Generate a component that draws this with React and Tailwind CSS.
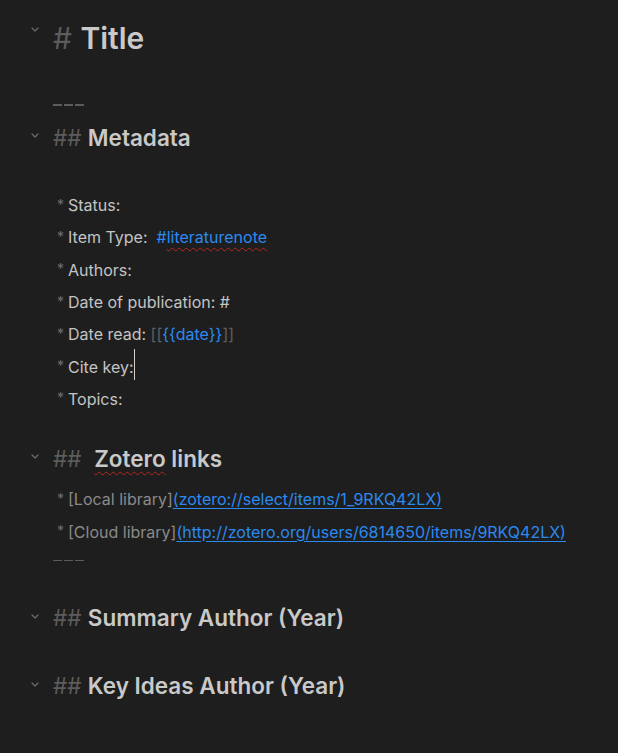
import React from 'react';

function Chevron() {
  return (
    <svg width="8" height="5" viewBox="0 0 8 5" className="shrink-0">
      <path d="M1 1 L4 4 L7 1" fill="none" stroke="#6b6b6b" strokeWidth="1.2" strokeLinecap="round" strokeLinejoin="round" />
    </svg>
  );
}

function Heading({ hashes, children, big, mt }) {
  return (
    <div className={`flex items-center ${big ? 'h-[40px]' : 'h-[32px]'} ${mt}`}>
      <div className={`w-[53px] pl-[31px] flex ${big ? 'self-start pt-[9px]' : 'self-start pt-[11px]'}`}>
        <Chevron />
      </div>
      <div className={`${big ? 'text-[30px]' : 'text-[22.5px]'} font-semibold text-[#c9c9c9] whitespace-pre leading-none`}>
        <span className="text-[#5c5c5c] font-normal">{hashes}</span>
        {children}
      </div>
    </div>
  );
}

function Rule({ mt }) {
  return (
    <div className={`h-[20px] flex items-center gap-[2px] pl-[53px] ${mt}`}>
      <span className="w-[9px] h-[1.5px] bg-[#5c5c5c]" />
      <span className="w-[9px] h-[1.5px] bg-[#5c5c5c]" />
      <span className="w-[9px] h-[1.5px] bg-[#5c5c5c]" />
    </div>
  );
}

function Item({ children }) {
  return (
    <div className="h-[32.3px] flex items-center pl-[57px] text-[16px] text-[#c4c4c4] whitespace-pre">
      <span className="text-[#6e6e6e] text-[14px] mr-[4px] -translate-y-[1px]">*</span>
      {children}
    </div>
  );
}

const squiggle = 'underline decoration-wavy decoration-[#b3261e] decoration-1 underline-offset-[4px]';
const link = 'text-[#2a8af0] underline decoration-[#2a8af0] underline-offset-[3px]';

export default function App() {
  return (
    <div className="min-h-screen bg-[#1e1e1e] pt-[18px] font-['Inter','Noto_Sans',sans-serif] antialiased">
      <Heading hashes="# " big mt="">Title</Heading>
      <Rule mt="mt-[37px]" />
      <Heading hashes="## " mt="mt-[7px]">Metadata</Heading>

      <div className="mt-[35px]">
        <Item>Status:</Item>
        <Item>
          Item Type:  <span className="text-[#2a8af0]">#<span className={squiggle}>literaturenote</span></span>
        </Item>
        <Item>Authors:</Item>
        <Item>Date of publication: #</Item>
        <Item>
          Date read: <span className="text-[#5f5f5f]">[[</span><span className="text-[#2a8af0]">{'{{date}}'}</span><span className="text-[#5f5f5f]">]]</span>
        </Item>
        <Item>
          Cite key:<span className="inline-block w-px h-[31px] bg-[#d0d0d0] -translate-y-[2px]" />
        </Item>
        <Item>Topics:</Item>
      </div>

      <Heading hashes="##  " mt="mt-[28px]">
        <span className={squiggle}>Zotero</span> links
      </Heading>

      <div className="mt-[8px]">
        <Item>
          <span className="text-[#8a8a8a]">[Local library]</span>
          <span className={link}>(zotero://select/items/1_9RKQ42LX)</span>
        </Item>
        <Item>
          <span className="text-[#8a8a8a]">[Cloud library]</span>
          <span className={link}>(http://zotero.org/users/6814650/items/9RKQ42LX)</span>
        </Item>
      </div>
      <Rule mt="mt-[3px]" />

      <Heading hashes="## " mt="mt-[32px]">Summary Author (Year)</Heading>
      <Heading hashes="## " mt="mt-[36px]">Key Ideas Author (Year)</Heading>
    </div>
  );
}
